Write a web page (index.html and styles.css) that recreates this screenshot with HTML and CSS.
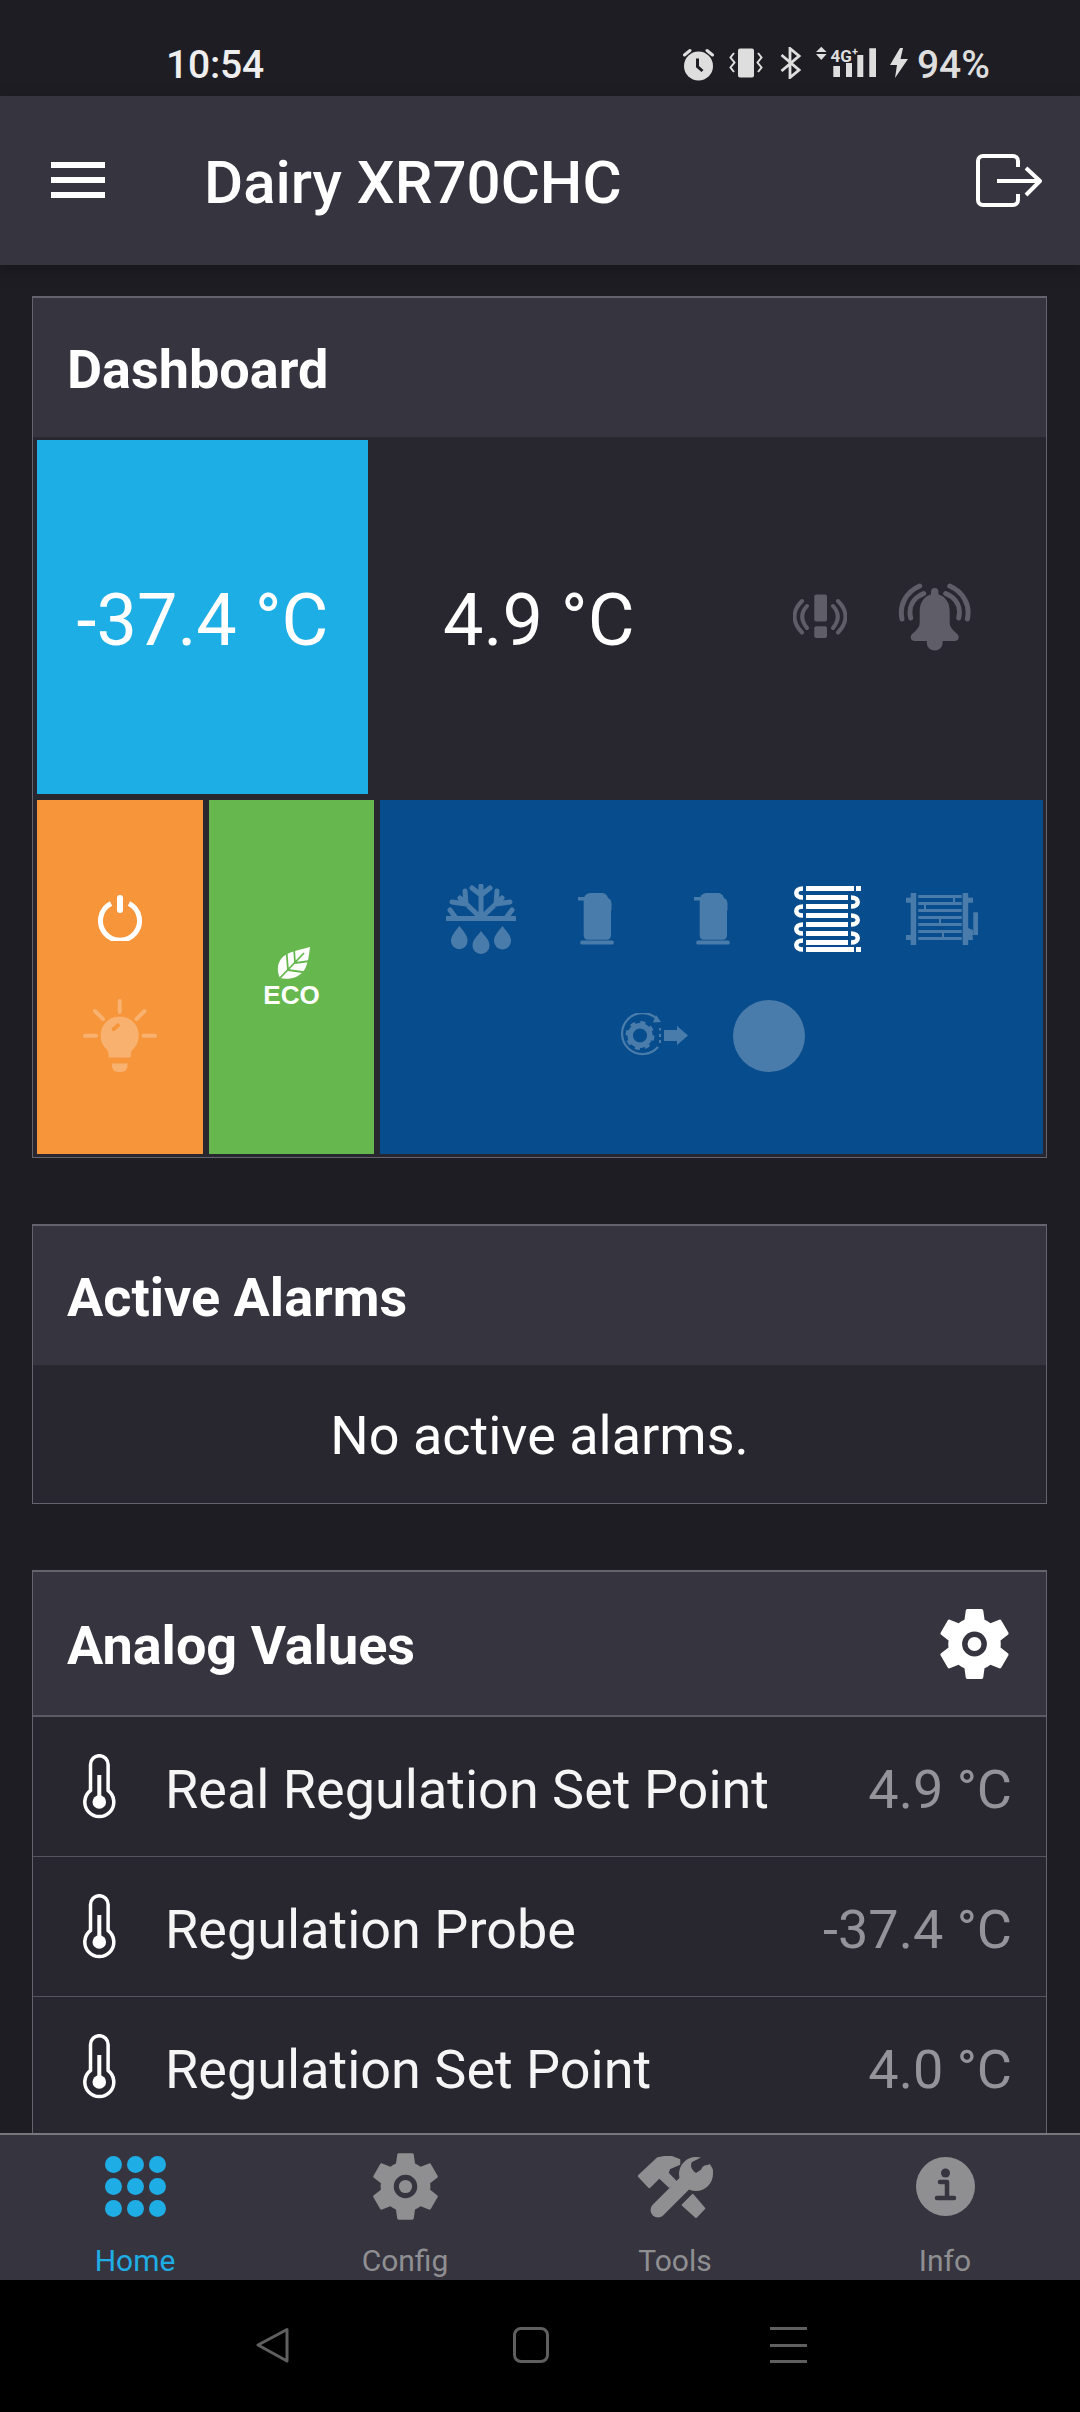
FILE: index.html
```html
<!DOCTYPE html>
<html lang="en">
<head>
<meta charset="utf-8">
<title>Dairy XR70CHC</title>
<link rel="stylesheet" href="styles.css">
</head>
<body>
<svg class="defs" width="0" height="0" aria-hidden="true">
  <defs>
    <symbol id="gear" viewBox="2.6 2.4 18.8 19.2">
      <path fill-rule="evenodd" d="M19.14 12.94c.04-.3.06-.61.06-.94 0-.32-.02-.64-.07-.94l2.03-1.58a.49.49 0 0 0 .12-.61l-1.92-3.32a.488.488 0 0 0-.59-.22l-2.39.96c-.5-.38-1.03-.7-1.62-.94l-.36-2.54a.484.484 0 0 0-.48-.41h-3.84c-.24 0-.43.17-.47.41l-.36 2.54c-.59.24-1.13.57-1.62.94l-2.39-.96c-.22-.08-.47 0-.59.22L2.74 8.87c-.12.21-.08.47.12.61l2.03 1.58c-.05.3-.09.63-.09.94s.02.64.07.94l-2.03 1.58a.49.49 0 0 0-.12.61l1.92 3.32c.12.22.37.29.59.22l2.39-.96c.5.38 1.03.7 1.62.94l.36 2.54c.05.24.24.41.48.41h3.84c.24 0 .44-.17.47-.41l.36-2.54c.59-.24 1.13-.56 1.62-.94l2.39.96c.22.08.47 0 .59-.22l1.92-3.32c.12-.22.07-.47-.12-.61l-2.01-1.58zM12 15.4a3.4 3.4 0 1 1 0-6.8 3.4 3.4 0 0 1 0 6.8z"/>
      <circle cx="12" cy="12" r="1.9"/>
    </symbol>
    <symbol id="thermo" viewBox="0 0 33 65">
      <path d="M7.5 36.5V10.5a8.8 8.8 0 0 1 17.6 0V36.5a14.5 14.5 0 1 1-17.6 0Z" fill="none" stroke="#fff" stroke-width="3.5"/>
      <path d="M16.3 21V48" stroke="#fff" stroke-width="4"/>
      <circle cx="16.3" cy="48" r="6.8" fill="#fff"/>
    </symbol>
    <symbol id="compressor" viewBox="0 0 36 52">
      <path d="M0 4h6.5C7 1.5 10 0 14 0h9c4 0 6 1.500 7 5 2.500 1 3.500 3 3.500 6v6l-.5 1v24c0 3-1.500 4.700-4.500 4.700H10c-3 0-4.300-1.700-4.300-4.700V7.500H0Z" fill="#fff"/>
      <rect x="2.300" y="47.500" width="33.400" height="4" rx="1.500" fill="#fff"/>
    </symbol>
  </defs>
</svg>
<div class="screen">
  <div class="status">
    <span class="time">10:54</span>
    <div class="status-icons">
      <svg class="ic-alarm" viewBox="0 0 31 34"><path d="M1.500 8 7 3.500M29.500 8 24 3.500" stroke="#dedede" stroke-width="3" stroke-linecap="round"/><circle cx="15.500" cy="19" r="14.500" fill="#dedede"/><path d="M14.500 11.500V19.500L19.500 24" fill="none" stroke="#1e1d24" stroke-width="3"/></svg>
      <svg class="ic-vib" viewBox="0 0 34 30"><rect x="9" y="0.500" width="16" height="29" rx="2" fill="#dedede"/><path d="M5 5 1.500 9.500 5.500 14.500 1.500 19.500 5 24M29 5l3.500 4.500-4 5 4 5L29 24" fill="none" stroke="#dedede" stroke-width="2"/></svg>
      <svg class="ic-bt" viewBox="0 0 21 32"><path d="M1.500 8 19 23 10 30.500V1.500L19 9 1.500 24" fill="none" stroke="#dedede" stroke-width="2.800"/></svg>
      <svg class="ic-sig" viewBox="0 0 60 32">
        <path d="M0 6 5.300.7 10.600 6ZM0 8H10.600L5.300 14Z" fill="#dedede"/>
        <text class="sig-text" x="14.500" y="15.500">4G</text><text class="sig-plus" x="36" y="9">+</text>
        <path d="M17.300 20H24V31H17.300ZM30 17H36V31H30ZM41.300 9H47.300V31H41.300ZM53.300 2.300H60V31H53.300Z" fill="#dedede"/>
      </svg>
      <svg class="ic-bolt" viewBox="0 0 18 30"><path d="M10 0 0 17H7L5 30 18 11H10.500L13 0Z" fill="#dedede"/></svg>
      <span class="batt">94%</span>
    </div>
  </div>

  <header class="appbar">
    <div class="burger"><span></span><span></span><span></span></div>
    <h1 class="app-title">Dairy XR70CHC</h1>
    <svg class="logout" viewBox="0 0 66 53"><path d="M42 13V7a5 5 0 0 0-5-5H7a5 5 0 0 0-5 5V46a5 5 0 0 0 5 5H37a5 5 0 0 0 5-5V40M21 27H63M50 14 64 27 50 41" fill="none" stroke="#fff" stroke-width="4" stroke-linejoin="round"/></svg>
  </header>

  <main class="content">
    <section class="card card-dash">
      <div class="card-head"><h2>Dashboard</h2></div>
      <div class="dash">
        <div class="dash-top">
          <div class="temp-box">-37.4 °C</div>
          <div class="temp-plain">4.9 °C</div>
          <svg class="ic-alert" viewBox="0 0 54 45">
            <rect x="21.300" y="1.500" width="12.700" height="27" rx="2" fill="#5f5e68"/><rect x="21.300" y="33.300" width="12.700" height="11.700" rx="2" fill="#5f5e68"/>
            <path d="M9 8C-1 18-1 29 9 39.500M14 13C7.500 20 7.500 27 14 35M45 8C55 18 55 29 45 39.500M40 13C46.500 20 46.500 27 40 35" fill="none" stroke="#5f5e68" stroke-width="4" stroke-linecap="round"/>
          </svg>
          <svg class="ic-bell" viewBox="0 0 74 68">
            <rect x="33" y="5" width="7.400" height="12" rx="3.700" fill="#5f5e68"/>
            <path d="M36.700 11C27 11 21.700 19 21.700 28V40C21.700 47 12.700 50 12.700 54Q12.700 58 17 58H56.400Q60.700 58 60.700 54C60.700 50 51.700 47 51.700 40V28C51.700 19 46.400 11 36.700 11Z" fill="#5f5e68"/>
            <circle cx="36.700" cy="59.500" r="8" fill="#5f5e68"/>
            <path d="M4 36C1 22 8 9 21.700 3M12.700 35C10 24 15 15 25.700 10.500M69.400 36C72.400 22 65.400 9 51.700 3M60.700 35C63.400 24 58.400 15 47.700 10.500" fill="none" stroke="#5f5e68" stroke-width="5" stroke-linecap="round"/>
          </svg>
        </div>
        <div class="dash-bottom">
          <div class="tile tile-orange">
            <div class="tile-slot">
              <svg class="ic-power" viewBox="0 0 44 46"><path d="M13 8.500A19.500 19.500 0 1 0 31 8.500" fill="none" stroke="#fff" stroke-width="5"/><path d="M22 3V15" stroke="#fff" stroke-width="6" stroke-linecap="round"/></svg>
            </div>
            <div class="tile-slot">
              <svg class="ic-bulb" viewBox="0 0 74 73">
                <path d="M36.700 2V13M12 12l8 8M61.500 12l-8 8M2 36.700H13M60.500 36.700H72" stroke="#fff" stroke-width="4" stroke-linecap="round"/>
                <path fill-rule="evenodd" d="M36.700 17.500a19 19 0 0 1 13 33c-1.500 1.600-2 4-2 8H25.700c0-4-.5-6.400-2-8a19 19 0 0 1 13-33ZM29 29a2 2 0 0 0 2.500 3l5-4.500a2 2 0 0 0-2.500-3Z" fill="#fff"/>
                <path d="M29 64.500H44.500V67a6 6 0 0 1-6 6H35a6 6 0 0 1-6-6Z" fill="#fff"/>
              </svg>
            </div>
          </div>
          <div class="tile tile-green">
            <svg class="ic-leaf" viewBox="0 0 33 33">
              <path d="M33 0C24 3 10 4 4 12 0 18 0 24 3 31 10 33 22 32 28 22 31 16 32 8 33 0Z" fill="#fff"/>
              <path d="M1 33 27 6M11 23 9.500 4M18 16 17 1M11 23 29 25.500M18 16 33 14" stroke="#66b84e" stroke-width="1.800" fill="none"/>
            </svg>
            <span class="eco">ECO</span>
          </div>
          <div class="tile tile-navy">
            <div class="slot">
              <svg class="ic-snow dim" viewBox="0 0 70 70">
                <g fill="none" stroke="#fff" stroke-width="5" stroke-linecap="round">
                  <path d="M1.500 34.500H68.500M35 34V6M26 4 35 11 44 4M35 2V8M35 34 14 14M35 34 56 14M6 18 20 20 19 7M64 18 50 20 51 7M4 26 10 34M66 26 60 34"/>
                </g>
                <g fill="#fff">
                  <path d="M13.300 42C10 47 5 51 5 57A8.300 8.300 0 0 0 21.600 57C21.600 51 17 47 13.300 42Z"/>
                  <path d="M35 47C32 52 26.500 55 26.500 61.500A8.500 8.500 0 0 0 43.500 61.500C43.500 55 38 52 35 47Z"/>
                  <path d="M56.500 42C53 47 48 51 48 57A8.500 8.500 0 0 0 65 57C65 51 60 47 56.500 42Z"/>
                </g>
              </svg>
            </div>
            <div class="slot"><svg class="ic-comp dim"><use href="#compressor"/></svg></div>
            <div class="slot"><svg class="ic-comp dim"><use href="#compressor"/></svg></div>
            <div class="slot">
              <svg class="ic-coil" viewBox="0 0 68 67">
                <g fill="#fff">
                  <rect x="13" y="1" width="48" height="5"/><rect x="13" y="10" width="42" height="5"/><rect x="13" y="19" width="42" height="5"/><rect x="13" y="28" width="42" height="5"/><rect x="13" y="37" width="42" height="5"/><rect x="13" y="46" width="42" height="5"/><rect x="13" y="55" width="42" height="5"/><rect x="13" y="62" width="48" height="5"/>
                  <rect x="63" y="1" width="5" height="5"/><rect x="63" y="62" width="5" height="5"/>
                </g>
                <path d="M10 3.500C1 3.500 1 12.500 10 12.500M10 21.500C1 21.500 1 30.500 10 30.500M10 39.500C1 39.500 1 48.500 10 48.500M10 55.500C1 55.500 1 64.500 10 64.500M58 12.500C67 12.500 67 21.500 58 21.500M58 30.500C67 30.500 67 39.500 58 39.500M58 48.500C67 48.500 67 57.500 58 57.500" fill="none" stroke="#fff" stroke-width="4.500"/>
              </svg>
            </div>
            <div class="slot">
              <svg class="ic-cond dim" viewBox="0 0 74 52">
                <g fill="#fff">
                  <rect x="4.700" width="5.500" height="52"/><rect x="56.700" width="5.500" height="52"/>
                  <rect y="4.700" width="5" height="5"/><rect y="42" width="5" height="5"/><rect x="62" y="4.700" width="5" height="5"/>
                  <rect x="12.300" y="2" width="43.400" height="3"/><rect x="12.300" y="9" width="43.400" height="3"/><rect x="12.300" y="16" width="43.400" height="3"/><rect x="12.300" y="23" width="43.400" height="3"/><rect x="12.300" y="30" width="43.400" height="3"/><rect x="12.300" y="37" width="43.400" height="3"/><rect x="12.300" y="44" width="43.400" height="3"/>
                  <rect x="47" y="4" width="2" height="6"/><rect x="18" y="12" width="2" height="5"/><rect x="33" y="26" width="2" height="5"/><rect x="36" y="39" width="2" height="5"/>
                  <rect x="67.300" y="19.300" width="4.700" height="22.700"/>
                  <path d="M62 35 67 37V42H66.500L67 47H62Z"/>
                </g>
              </svg>
            </div>
            <div class="slot">
              <svg class="ic-fan dim" viewBox="0 0 69 45">
                <path d="M38 6A20.500 20.500 0 1 0 39 34" fill="none" stroke="#fff" stroke-width="2.200"/>
                <path d="M42 9 34 9.500 37 2Z" fill="#fff"/>
                <circle cx="21" cy="22.500" r="9.800" fill="none" stroke="#fff" stroke-width="5.500"/>
                <circle cx="21" cy="22.500" r="13" fill="none" stroke="#fff" stroke-width="3" stroke-dasharray="5 5.200"/>
                <path d="M41 15V17.500M41 21V24M41 27V30" stroke="#fff" stroke-width="2"/>
                <path d="M45 17H58V13L69 22.500 58 32V28H45Z" fill="#fff"/>
              </svg>
            </div>
            <div class="slot"><span class="dot dim"></span></div>
          </div>
        </div>
      </div>
    </section>

    <section class="card card-alarms">
      <div class="card-head"><h2>Active Alarms</h2></div>
      <div class="no-alarms">No active alarms.</div>
    </section>

    <section class="card card-analog">
      <div class="card-head head-analog">
        <h2>Analog Values</h2>
        <svg class="head-gear"><use href="#gear"/></svg>
      </div>
      <div class="row"><svg class="row-ic"><use href="#thermo"/></svg><span class="row-label">Real Regulation Set Point</span><span class="row-value">4.9 °C</span></div>
      <div class="row"><svg class="row-ic"><use href="#thermo"/></svg><span class="row-label">Regulation Probe</span><span class="row-value">-37.4 °C</span></div>
      <div class="row"><svg class="row-ic"><use href="#thermo"/></svg><span class="row-label">Regulation Set Point</span><span class="row-value">4.0 °C</span></div>
    </section>
  </main>

  <nav class="tabs">
    <div class="tab tab-on">
      <svg class="tab-ic ic-grid" viewBox="0 0 61 61">
        <g fill="#1fade6"><circle cx="8.500" cy="8.500" r="8.500"/><circle cx="30.500" cy="8.500" r="8.500"/><circle cx="52.500" cy="8.500" r="8.500"/><circle cx="8.500" cy="30.500" r="8.500"/><circle cx="30.500" cy="30.500" r="8.500"/><circle cx="52.500" cy="30.500" r="8.500"/><circle cx="8.500" cy="52.500" r="8.500"/><circle cx="30.500" cy="52.500" r="8.500"/><circle cx="52.500" cy="52.500" r="8.500"/></g>
      </svg>
      <span>Home</span>
    </div>
    <div class="tab">
      <svg class="tab-ic ic-tabgear"><use href="#gear"/></svg>
      <span>Config</span>
    </div>
    <div class="tab">
      <svg class="tab-ic ic-tools" viewBox="0 0 76 62">
        <path d="M.7 20 19.700 2.300 31.300 0 41.300 4V8L31.300 12.300 29.700 17.300 38 25.700 31.300 30.700 21.300 21.300 11.300 31.300Z" fill="#8f8f92" stroke="#8f8f92" stroke-width="2" stroke-linejoin="round"/>
        <path d="M44.700 49 54.700 39 66.300 52.300 58 61Z" fill="#8f8f92" stroke="#8f8f92" stroke-width="2" stroke-linejoin="round"/>
        <path d="M20 54 50 24" stroke="#8f8f92" stroke-width="15" stroke-linecap="round"/>
        <circle cx="58" cy="18" r="17" fill="#8f8f92"/>
        <path d="M58 17 76 5 70 -2 54 6C52 9 53 14 58 17Z" fill="#35343f"/>
        <circle cx="69" cy="15" r="6" fill="#8f8f92"/>
      </svg>
      <span>Tools</span>
    </div>
    <div class="tab">
      <svg class="tab-ic ic-info" viewBox="0 0 59 59">
        <circle cx="29.500" cy="29.500" r="29.500" fill="#8f8f92"/>
        <circle cx="29.500" cy="16" r="4.500" fill="#35343f"/>
        <path d="M24 25H31V41H38M21 41H38" fill="none" stroke="#35343f" stroke-width="4.500" stroke-linecap="round" stroke-linejoin="round"/>
      </svg>
      <span>Info</span>
    </div>
  </nav>

  <div class="sysnav">
    <svg class="sys-back" viewBox="0 0 34 36"><path d="M31 2.500 2 18 31 34Z" fill="none" stroke="#5f5f5f" stroke-width="3" stroke-linejoin="round"/></svg>
    <span class="sys-home"></span>
    <div class="sys-menu"><span></span><span></span><span></span></div>
  </div>
</div>
</body>
</html>
```

FILE: styles.css
```css
* { box-sizing: border-box; }
html, body { margin: 0; padding: 0; background: #1e1d24; }
body { font-family: Roboto, "Noto Sans", sans-serif; color: #fff; }
.defs { display: block; height: 0; }
.screen { width: 1080px; height: 2412px; display: flex; flex-direction: column; overflow: hidden; background: #1e1d24; }

/* status bar */
.status { height: 96px; flex: none; display: flex; align-items: flex-start; padding: 42px 0 0 166px; color: #eee; }
.time { font-size: 39px; line-height: 46px; font-weight: 500; letter-spacing: -.2px; }
.status-icons { display: flex; align-items: flex-start; margin-left: 419px; }
.ic-alarm { width: 31px; height: 34px; margin-top: 5px; }
.ic-vib { width: 34px; height: 30px; margin: 6px 0 0 15px; }
.ic-bt { width: 21px; height: 32px; margin: 5px 0 0 17px; }
.ic-sig { width: 60px; height: 32px; margin: 4px 0 0 15px; }
.sig-text { font: 700 17px Roboto, sans-serif; fill: #dedede; }
.sig-plus { font: 700 11px Roboto, sans-serif; fill: #dedede; }
.ic-bolt { width: 18px; height: 30px; margin: 6px 0 0 14px; }
.batt { font-size: 39px; line-height: 46px; font-weight: 500; color: #dedede; margin-left: 9px; }

/* app bar */
.appbar { height: 169px; flex: none; display: flex; align-items: center; padding: 0 38px 0 51px; background: #35343f; box-shadow: 0 6px 12px rgba(20, 20, 24, .55); position: relative; z-index: 2; }
.burger { width: 54px; height: 36px; display: flex; flex-direction: column; justify-content: space-between; margin-top: -1px; }
.burger span { display: block; height: 6px; background: #fff; }
.app-title { margin: 4px 0 0 99px; flex: 1; font-size: 60px; line-height: 70px; font-weight: 500; }
.logout { width: 66px; height: 53px; margin-top: -1px; }

/* content */
.content { flex: 1; min-height: 0; overflow: hidden; padding: 31px 33px 0 32px; display: flex; flex-direction: column; gap: 66px; }
.card { flex: none; background: #282730; border: 1px solid #65646e; border-top-width: 2px; }
.card-head { height: 139px; display: flex; align-items: center; padding: 0 37px 0 34px; background: #35343f; }
.card-head h2 { margin: 4px 0 0; flex: 1; font-size: 54px; line-height: 60px; font-weight: 700; }

.card-dash { height: 862px; }
.dash { padding: 3px 3px 3px 4px; display: flex; flex-direction: column; gap: 6px; }
.dash-top { height: 354px; display: flex; align-items: center; }
.temp-box { width: 331px; height: 100%; flex: none; background: #1eaee6; display: flex; align-items: center; justify-content: center; font-size: 72px; font-weight: 400; padding-top: 6px; }
.temp-plain { width: 412px; flex: none; padding: 6px 0 0 75px; font-size: 72px; font-weight: 400; }
.ic-alert { width: 54px; height: 45px; flex: none; margin: -3px 0 0 13px; }
.ic-bell { width: 74px; height: 68px; flex: none; margin-left: 51px; }

.dash-bottom { height: 354px; display: flex; gap: 6px; }
.tile { height: 100%; }
.tile-orange { width: 166px; background: #f6953a; display: flex; flex-direction: column; justify-content: center; }
.tile-slot { height: 116px; display: flex; align-items: center; justify-content: center; }
.ic-power { width: 44px; height: 46px; margin-top: -2px; }
.ic-bulb { width: 74px; height: 73px; opacity: .27; }
.tile-green { width: 165px; background: #66b84e; display: flex; flex-direction: column; align-items: center; justify-content: center; }
.ic-leaf { width: 33px; height: 33px; margin-left: 3px; }
.eco { font: 700 26px/25px "Liberation Sans", Arial, sans-serif; margin-top: 3px; }
.tile-navy { flex: 1; background: #074c8c; display: flex; flex-wrap: wrap; justify-content: center; align-content: center; }
.slot { width: 115.500px; height: 117px; display: flex; align-items: center; justify-content: center; }
.dim { opacity: .27; }
.ic-snow { width: 70px; height: 70px; }
.ic-comp { width: 36px; height: 52px; }
.ic-coil { width: 68px; height: 67px; }
.ic-cond { width: 74px; height: 52px; }
.ic-fan { width: 69px; height: 45px; }
.dot { display: block; width: 72px; height: 72px; border-radius: 50%; background: #fff; }

.card-alarms { height: 280px; }
.no-alarms { height: 139px; display: flex; align-items: center; justify-content: center; padding-top: 2px; font-size: 54px; font-weight: 400; }

.head-analog { height: 145px; border-bottom: 2px solid #5b5a65; }
.head-gear { width: 69px; height: 70px; fill: #fff; }
.row { height: 140px; display: flex; align-items: center; padding: 0 34px 0 50px; border-bottom: 1px solid #55545e; }
.row-ic { width: 33px; height: 65px; flex: none; }
.row-label { flex: 1; margin: 6px 0 0 49px; font-size: 54px; font-weight: 400; color: #f5f5f5; }
.row-value { margin-top: 6px; font-size: 54px; font-weight: 400; color: #94939a; }

/* tab bar */
.tabs { height: 147px; flex: none; display: grid; grid-template-columns: repeat(4, 270px); background: #35343f; border-top: 2px solid #77777e; position: relative; z-index: 2; }
.tab { display: flex; flex-direction: column; align-items: center; color: #8f8f92; font-size: 30px; line-height: 36px; }
.tab span { margin-top: auto; margin-bottom: 1px; }
.tab-on { color: #1fade6; }
.tab-ic { flex: none; }
.ic-grid { width: 61px; height: 61px; margin-top: 21px; }
.ic-tabgear { width: 65px; height: 67px; margin-top: 18px; fill: #8f8f92; }
.ic-tools { width: 76px; height: 62px; margin: 21px 0 0 2px; }
.ic-info { width: 59px; height: 59px; margin-top: 22px; }

/* system nav */
.sysnav { height: 132px; flex: none; background: #000; display: flex; align-items: center; padding: 0 0 2px 256px; }
.sys-back { width: 34px; height: 36px; flex: none; }
.sys-home { display: block; width: 36px; height: 36px; margin-left: 223px; border: 3px solid #5f5f5f; border-radius: 8px; flex: none; }
.sys-menu { width: 37px; height: 36px; margin-left: 221px; display: flex; flex-direction: column; justify-content: space-between; flex: none; }
.sys-menu span { display: block; height: 3px; background: #5f5f5f; }
```
